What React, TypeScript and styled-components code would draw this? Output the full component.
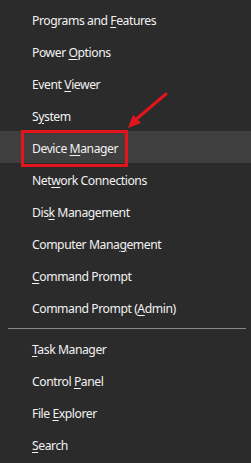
import React from "react";
import styled, { createGlobalStyle } from "styled-components";

const GlobalStyle = createGlobalStyle`
  html, body {
    margin: 0;
    padding: 0;
    background: #2b2b2b;
  }
`;

const Menu = styled.div`
  position: relative;
  width: 251px;
  height: 463px;
  padding-top: 3px;
  box-sizing: border-box;
  background: #2b2b2b;
  font-family: "Noto Sans", Lato, sans-serif;
  font-size: 12.2px;
  letter-spacing: -0.45px;
  color: #f2f2f2;
`;

const Row = styled.div<{ $active?: boolean }>`
  position: relative;
  height: 32px;
  display: flex;
  align-items: center;
  padding-left: 32px;
  padding-top: 2px;
  box-sizing: border-box;
  background: ${(p) => (p.$active ? "#3f3f3f" : "transparent")};

  u {
    text-decoration-thickness: 1px;
    text-underline-offset: 2px;
  }
`;

const Separator = styled.div`
  height: 1px;
  margin: 5px 5px 3px 8px;
  background: #8a8a8a;
`;

const RedBox = styled.div`
  position: absolute;
  left: 21px;
  top: -1px;
  width: 107px;
  height: 37px;
  box-sizing: border-box;
  border: 3px solid #e3141c;
`;

const Arrow = styled.svg`
  position: absolute;
  left: 120px;
  top: 85px;
`;

type Item = { pre: string; key: string; post: string };

const top: Item[] = [
  { pre: "Programs and ", key: "F", post: "eatures" },
  { pre: "Power ", key: "O", post: "ptions" },
  { pre: "Event ", key: "V", post: "iewer" },
  { pre: "S", key: "y", post: "stem" },
  { pre: "Device ", key: "M", post: "anager" },
  { pre: "Net", key: "w", post: "ork Connections" },
  { pre: "Dis", key: "k", post: " Management" },
  { pre: "Computer Mana", key: "g", post: "ement" },
  { pre: "", key: "C", post: "ommand Prompt" },
  { pre: "Command Prompt (", key: "A", post: "dmin)" },
];

const bottom: Item[] = [
  { pre: "", key: "T", post: "ask Manager" },
  { pre: "Control ", key: "P", post: "anel" },
  { pre: "File ", key: "E", post: "xplorer" },
  { pre: "", key: "S", post: "earch" },
];

const Label = ({ item }: { item: Item }) => (
  <span>
    {item.pre}
    <u>{item.key}</u>
    {item.post}
  </span>
);

export default function App() {
  return (
    <>
      <GlobalStyle />
      <Menu>
        {top.map((item) => {
          const active = item.pre === "Device ";
          return (
            <Row key={item.pre + item.key} $active={active}>
              <Label item={item} />
              {active && <RedBox />}
            </Row>
          );
        })}
        <Separator />
        {bottom.map((item) => (
          <Row key={item.pre + item.key}>
            <Label item={item} />
          </Row>
        ))}
        <Arrow width="55" height="50" viewBox="0 0 55 50">
          <line x1="46" y1="9" x2="14" y2="36" stroke="#e3141c" strokeWidth="3" strokeLinecap="round" />
          <polygon points="8,43 13,30 21,38" fill="#e3141c" />
        </Arrow>
      </Menu>
    </>
  );
}
